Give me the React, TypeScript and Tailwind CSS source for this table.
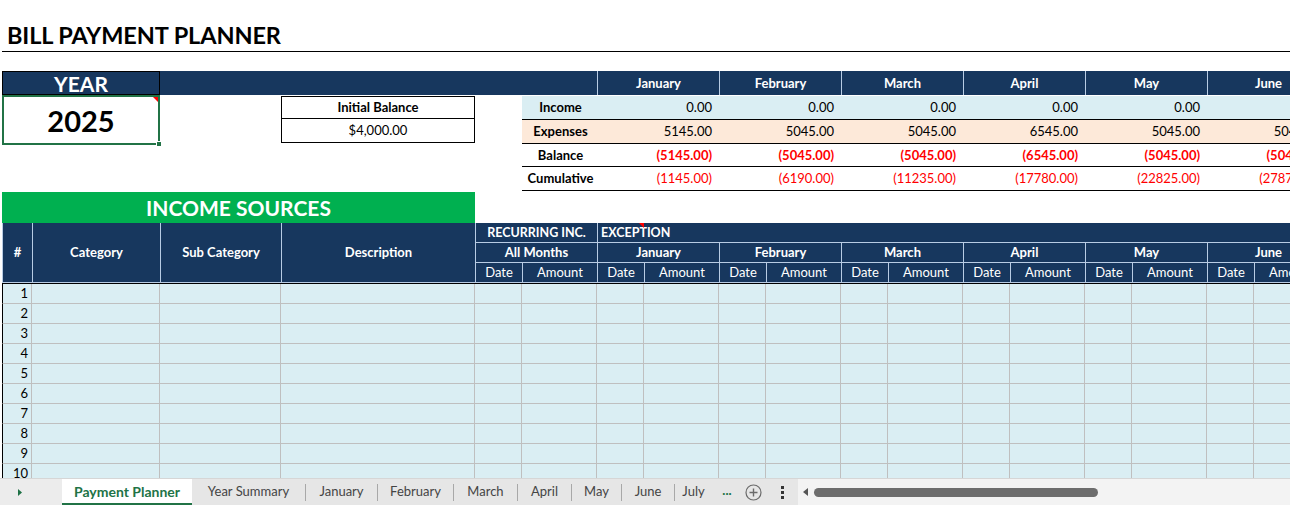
import React from "react";

const COLS =
  "grid grid-cols-[30px_128px_121px_194px_47px_75px_47px_75px_47px_75px_47px_75px_47px_75px_47px_75px_47px_75px_47px_75px]";
const MONTHS = ["January", "February", "March", "April", "May", "June", "July"];

const expenses = ["5145.00", "5045.00", "5045.00", "6545.00", "5045.00", "5045.00", "5045.00"];
const balance = ["(5145.00)", "(5045.00)", "(5045.00)", "(6545.00)", "(5045.00)", "(5045.00)", "(5045.00)"];
const cumulative = ["(1145.00)", "(6190.00)", "(11235.00)", "(17780.00)", "(22825.00)", "(27870.00)", "(32915.00)"];

const SUMROWS = [
  { label: "Income", values: MONTHS.map(() => "0.00"), row: "bg-[#daeef3]", val: "text-black" },
  { label: "Expenses", values: expenses, row: "bg-[#fde9d9]", val: "text-black" },
  { label: "Balance", values: balance, row: "bg-white", val: "text-[#ff0000] font-bold" },
  { label: "Cumulative", values: cumulative, row: "bg-white", val: "text-[#ff0000]" },
];

const HB = "border-r border-b border-[#b8cce4]";

function Tab({ label, w }: { label: string; w: string }) {
  return (
    <div className={`flex items-center ${w}`}>
      <div className="w-px h-[17px] bg-[#a8a8a8]" />
      <div className="flex-1 flex items-center justify-center text-[#444]">{label}</div>
    </div>
  );
}

export default function App() {
  return (
    <div className="w-[1290px] h-[505px] overflow-hidden bg-white font-[Lato,sans-serif] text-[13px] text-black flex flex-col">
      <div className="h-[478px] overflow-hidden">
        {/* Title */}
        <div className="h-[52px] ml-[2px] border-b border-black flex items-end pl-[5px] pb-[4px]">
          <h1 className="text-[23.5px] font-bold leading-none tracking-[-0.1px]">BILL PAYMENT PLANNER</h1>
        </div>
        <div className="h-[19px]" />

        {/* Navy band */}
        <div className="pl-[2px]">
          <div className={`${COLS} h-[24px] bg-[#17375e] text-white font-bold`}>
            <div className="col-span-2 border border-black flex items-center justify-center text-[21px] leading-none">
              YEAR
            </div>
            <div className="col-span-4" />
            {MONTHS.map((m) => (
              <div key={m} className="col-span-2 border-l border-[#b8cce4] flex items-center justify-center pt-[2px]">
                {m}
              </div>
            ))}
          </div>

          {/* Middle section */}
          <div className={`${COLS} grid-rows-[24px_24px_24px_24px]`}>
            <div className="col-start-1 col-span-2 row-start-1 row-span-2 h-[50px] border-2 border-[#217346] relative flex items-center justify-center">
              <span className="text-[29px] font-bold leading-none">2025</span>
              <div className="absolute top-0 right-0 w-0 h-0 border-t-[5px] border-l-[5px] border-t-[#ff0000] border-l-transparent" />
              <div className="absolute -bottom-[4px] -right-[4px] w-[6px] h-[6px] bg-[#217346] border border-white" />
            </div>
            <div className="col-start-4 row-start-1 row-span-2 mt-[1px] h-[47px] border border-black flex flex-col">
              <div className="h-[22px] border-b border-black flex items-center justify-center font-bold pt-[1px]">
                Initial Balance
              </div>
              <div className="h-[22px] flex items-center justify-center pt-[2px]">$4,000.00</div>
            </div>
            <div className="col-start-6 col-span-15 row-start-1 row-span-4 flex flex-col pt-[1px]">
              {SUMROWS.map((r) => (
                <div
                  key={r.label}
                  className={`grid grid-cols-[75px_122px_122px_122px_122px_122px_122px_122px] h-[24px] border-b border-black items-center pt-[1px] ${r.row}`}
                >
                  <div className="font-bold text-center whitespace-nowrap pl-[2px]">{r.label}</div>
                  {r.values.map((v, i) => (
                    <div key={i} className={`text-right pr-[7px] ${r.val}`}>
                      {v}
                    </div>
                  ))}
                </div>
              ))}
            </div>
          </div>

          {/* Green bar */}
          <div className={`${COLS} h-[32px] pt-[1px]`}>
            <div className="col-span-4 bg-[#00b050] text-white font-bold text-[21px] flex items-center justify-center leading-none">
              INCOME SOURCES
            </div>
          </div>

          {/* Header */}
          <div className={`${COLS} grid-rows-[20px_20px_20px] bg-[#17375e] text-white border-l border-[#b8cce4]`}>
            <div className={`row-span-3 ${HB} flex items-center justify-center font-bold`}>#</div>
            <div className={`row-span-3 ${HB} flex items-center justify-center font-bold`}>Category</div>
            <div className={`row-span-3 ${HB} flex items-center justify-center font-bold`}>Sub Category</div>
            <div className={`row-span-3 ${HB} flex items-center justify-center font-bold`}>Description</div>
            <div className={`col-span-2 ${HB} flex items-center justify-center font-bold text-[12.5px] pt-[1px]`}>
              RECURRING INC.
            </div>
            <div className="col-span-14 border-b border-[#b8cce4] flex items-center pl-[3px] pt-[1px] font-bold relative text-[12.5px]">
              EXCEPTION
              <div className="absolute top-0 left-[41px] w-0 h-0 border-t-[5px] border-l-[5px] border-t-[#ff0000] border-l-transparent" />
            </div>
            <div className={`col-span-2 ${HB} flex items-center justify-center font-bold`}>All Months</div>
            {MONTHS.map((m) => (
              <div key={m} className={`col-span-2 ${HB} flex items-center justify-center font-bold`}>
                {m}
              </div>
            ))}
            {Array.from({ length: 8 }).flatMap((_, i) => [
              <div key={`d${i}`} className={`${HB} flex items-center justify-center pt-[1px]`}>
                Date
              </div>,
              <div key={`a${i}`} className={`${HB} flex items-center justify-center pt-[1px]`}>
                Amount
              </div>,
            ])}
          </div>

          {/* Data rows */}
          <div className="border-t border-black">
            {Array.from({ length: 10 }).map((_, r) => (
              <div key={r} className={`${COLS} h-[20px] bg-[#daeef3]`}>
                {Array.from({ length: 20 }).map((__, c) => (
                  <div
                    key={c}
                    className={`border-r border-b border-[#bfbfbf] ${
                      c === 0 ? "border-l border-l-black text-right pr-[3px] leading-[19px]" : ""
                    }`}
                  >
                    {c === 0 ? r + 1 : null}
                  </div>
                ))}
              </div>
            ))}
          </div>
        </div>
      </div>

      {/* Tab bar */}
      <div className="h-[27px] flex items-stretch bg-[#e6e6e6] text-[13px] border-t border-[#d6d6d6]">
        <div className="w-[62px] bg-[#ececec] flex items-center pl-[17px]">
          <svg width="6" height="9" viewBox="0 0 6 9">
            <path d="M1 1 L5 4.5 L1 8 Z" fill="#1e7145" />
          </svg>
        </div>
        <div className="w-[130px] bg-white flex items-center justify-center font-bold text-[14px] text-[#217346] border-b-2 border-[#217346]">
          Payment Planner
        </div>
        <div className="w-[113px] flex items-center justify-center text-[#444]">Year Summary</div>
        <Tab label="January" w="w-[72px]" />
        <Tab label="February" w="w-[76px]" />
        <Tab label="March" w="w-[64px]" />
        <Tab label="April" w="w-[54px]" />
        <Tab label="May" w="w-[50px]" />
        <Tab label="June" w="w-[53px]" />
        <div className="flex items-center w-[40px]">
          <div className="w-px h-[17px] bg-[#a8a8a8]" />
          <div className="flex-1 flex items-center justify-center text-[#444] pr-[2px]">July</div>
        </div>
        <div className="w-[26px] flex items-center justify-center text-[#217346] font-bold pb-[2px]">...</div>
        <div className="w-[26px] flex items-center justify-center">
          <svg width="17" height="17" viewBox="0 0 17 17">
            <circle cx="8.5" cy="8.5" r="7.5" fill="none" stroke="#6b6b6b" strokeWidth="1.2" />
            <path d="M8.5 4.5 V12.5 M4.5 8.5 H12.5" stroke="#6b6b6b" strokeWidth="1.4" />
          </svg>
        </div>
        <div className="w-[32px] flex items-center justify-center">
          <svg width="3" height="13" viewBox="0 0 3 13">
            <rect x="0" y="0" width="3" height="3" fill="#333" />
            <rect x="0" y="5" width="3" height="3" fill="#333" />
            <rect x="0" y="10" width="3" height="3" fill="#333" />
          </svg>
        </div>
        <div className="flex-1 bg-[#f3f3f3] flex items-center pl-[5px]">
          <svg width="6" height="8" viewBox="0 0 6 8">
            <path d="M5 0 L0 4 L5 8 Z" fill="#555" />
          </svg>
          <div className="ml-[5px] w-[284px] h-[9px] rounded-full bg-[#6d6d6d]" />
        </div>
      </div>
    </div>
  );
}
